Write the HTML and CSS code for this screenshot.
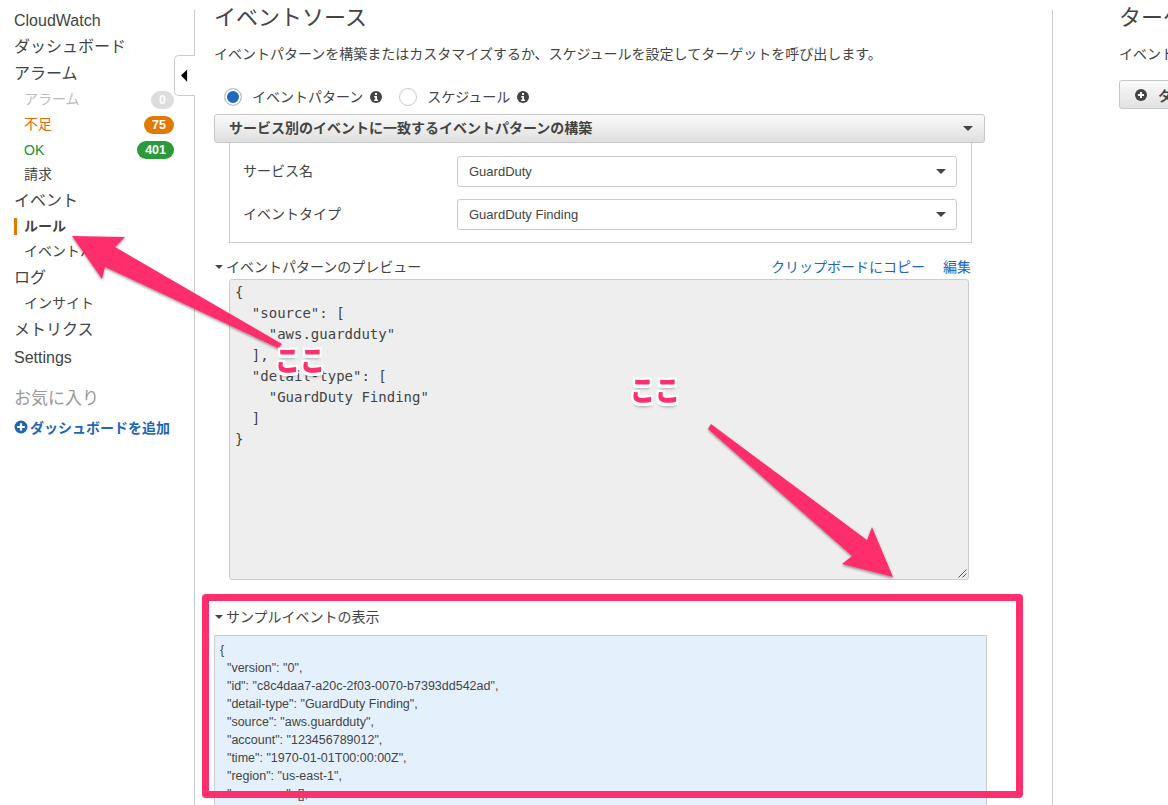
FILE: index.html
```html
<!DOCTYPE html>
<html lang="ja">
<head>
<meta charset="utf-8">
<title>CloudWatch</title>
<link rel="stylesheet" href="styles.css">
</head>
<body>
<div class="page">
  <nav class="sidebar">
    <div class="nav-top brand">CloudWatch</div>
    <div class="nav-top">ダッシュボード</div>
    <div class="nav-top">アラーム</div>
    <div class="nav-sub muted"><span class="ja">アラーム</span><span class="badge badge-grey">0</span></div>
    <div class="nav-sub orange"><span class="ja">不足</span><span class="badge badge-orange">75</span></div>
    <div class="nav-sub green"><span>OK</span><span class="badge badge-green">401</span></div>
    <div class="nav-sub"><span class="ja">請求</span></div>
    <div class="nav-top">イベント</div>
    <div class="nav-sub active"><span class="ja">ルール</span></div>
    <div class="nav-sub"><span class="ja">イベントバス</span></div>
    <div class="nav-top">ログ</div>
    <div class="nav-sub"><span class="ja">インサイト</span></div>
    <div class="nav-top">メトリクス</div>
    <div class="nav-top nav-latin">Settings</div>
    <div class="fav-title">お気に入り</div>
    <div class="fav-add">
      <svg class="icon-add" viewBox="0 0 14 14"><circle cx="7" cy="7" r="6.5" fill="#1f66b5"/><path d="M7 3.2v7.6M3.2 7h7.6" stroke="#fff" stroke-width="2.2"/></svg>
      <span>ダッシュボードを追加</span>
    </div>
    <button class="collapse" aria-label="collapse"><svg viewBox="0 0 8 14" class="collapse-arrow"><path d="M7 0v14L0 7z" fill="#000"/></svg></button>
  </nav>

  <main class="main">
    <h2 class="title">イベントソース</h2>
    <p class="desc">イベントパターンを構築またはカスタマイズするか、スケジュールを設定してターゲットを呼び出します。</p>
    <div class="radios">
      <span class="radio radio-on"></span>
      <span class="radio-label">イベントパターン</span>
      <svg class="info" viewBox="0 0 12 12"><circle cx="6" cy="6" r="6" fill="#444"/><rect x="5" y="2" width="2" height="2" fill="#fff"/><path d="M4.2 5h2.8v3.4h1V10H4.2V8.4h1V6.4h-1z" fill="#fff"/></svg>
      <span class="radio radio-off"></span>
      <span class="radio-label">スケジュール</span>
      <svg class="info" viewBox="0 0 12 12"><circle cx="6" cy="6" r="6" fill="#444"/><rect x="5" y="2" width="2" height="2" fill="#fff"/><path d="M4.2 5h2.8v3.4h1V10H4.2V8.4h1V6.4h-1z" fill="#fff"/></svg>
    </div>
    <div class="bar"><span class="ja">サービス別のイベントに一致するイベントパターンの構築</span><i class="caret"></i></div>
    <div class="panel">
      <div class="field"><label class="field-label ja">サービス名</label><div class="select"><span>GuardDuty</span><i class="caret"></i></div></div>
      <div class="field"><label class="field-label ja">イベントタイプ</label><div class="select"><span>GuardDuty Finding</span><i class="caret"></i></div></div>
    </div>
    <div class="section-head head-preview">
      <i class="caret caret-small"></i><span class="section-name">イベントパターンのプレビュー</span>
      <a class="link link-copy">クリップボードにコピー</a><a class="link">編集</a>
    </div>
    <div class="code-area">
<pre class="code">{
  "source": [
    "aws.guardduty"
  ],
  "detail-type": [
    "GuardDuty Finding"
  ]
}</pre>
      <svg class="grip" viewBox="0 0 9 9"><path d="M0.5 8.5l8-8M4.5 8.5l4-4" stroke="#555" stroke-width="1"/></svg>
    </div>
    <div class="section-head head-sample">
      <i class="caret caret-small"></i><span class="section-name">サンプルイベントの表示</span>
    </div>
    <pre class="sample">{
  "version": "0",
  "id": "c8c4daa7-a20c-2f03-0070-b7393dd542ad",
  "detail-type": "GuardDuty Finding",
  "source": "aws.guardduty",
  "account": "123456789012",
  "time": "1970-01-01T00:00:00Z",
  "region": "us-east-1",
  "resources": [],
  "detail": {}
}</pre>
  </main>

  <aside class="right">
    <h2 class="title">ターゲット</h2>
    <p class="desc">イベントまたはスケジュールが発生したときに呼び出すターゲットを選択します。</p>
    <div class="add-btn">
      <svg class="icon-plus" viewBox="0 0 12 12"><circle cx="6" cy="6" r="6" fill="#444"/><path d="M6 3v6M3 6h6" stroke="#fff" stroke-width="2"/></svg>
      <span>ターゲットの追加</span>
    </div>
  </aside>
</div>

<svg class="arrows" viewBox="0 0 1168 805">
  <defs><filter id="sh" x="-10%" y="-10%" width="120%" height="120%"><feDropShadow dx="0" dy="1.5" stdDeviation="1.2" flood-color="#000" flood-opacity=".4"/></filter></defs>
  <polygon filter="url(#sh)" fill="#fe2f6c" points="72,236 125,237 115,247 282,344 278,348 105,267 102,279"/>
  <polygon filter="url(#sh)" fill="#fe2f6c" points="893,577 842,564 852,556 708,429 711,424 867,540 872,527"/>
</svg>
<div class="redbox"></div>
<span class="note note-a">ここ</span>
<span class="note note-b">ここ</span>
</body>
</html>
```

FILE: styles.css
```css
* { box-sizing: border-box; }
html, body { margin: 0; height: 805px; overflow: hidden; background: #fff; }
body {
  position: relative;
  width: 1168px;
  font-family: "Liberation Sans", "Noto Sans CJK JP", sans-serif;
  font-size: 14px;
  color: #444;
}
.page { display: flex; align-items: flex-start; width: 1400px; height: 805px; }
.ja { margin-bottom: 4px; }

/* sidebar */
.sidebar {
  position: relative;
  flex: none;
  width: 195px;
  height: 795px;
  margin-top: 10px;
  padding: 0 20px 0 14px;
  border-right: 1px solid #ccc;
}
.nav-top { height: 27px; line-height: 27px; font-size: 16px; }
.brand { height: 20px; line-height: 22px; margin-bottom: 3px; }
.nav-latin { line-height: 29px; }
.nav-sub {
  position: relative;
  display: flex;
  justify-content: space-between;
  align-items: center;
  height: 25px;
  padding-left: 10px;
  font-size: 14px;
}
.muted { color: #bbb; }
.orange { color: #dd6b10; }
.green { color: #1d8f2f; }
.active { font-weight: 700; }
.active::before {
  content: "";
  position: absolute;
  left: 0;
  top: 4px;
  width: 3px;
  height: 17px;
  background: #e07b00;
}
.badge {
  height: 18px;
  line-height: 18px;
  padding: 0 8px;
  border-radius: 9px;
  color: #fff;
  font-size: 12.5px;
  font-weight: 700;
}
.badge-grey { background: #ddd; }
.badge-orange { background: #e07b00; }
.badge-green { background: #2a9a3a; }
.fav-title { margin-top: 16px; height: 26px; line-height: 26px; font-size: 17px; color: #999; }
.fav-add {
  display: flex;
  align-items: center;
  gap: 2px;
  margin-top: 5px;
  height: 20px;
  font-weight: 700;
  color: #1f66b5;
}
.icon-add { flex: none; width: 14px; height: 14px; }
.collapse {
  position: absolute;
  left: 174px;
  top: 45px;
  display: flex;
  align-items: center;
  justify-content: center;
  width: 21px;
  height: 41px;
  padding: 0 2px 0 0;
  background: #fff;
  border: 1px solid #ccc;
  border-right: 0;
  border-radius: 5px 0 0 5px;
}
.collapse-arrow { width: 7px; height: 13px; }

/* main column */
.main {
  flex: none;
  width: 858px;
  height: 795px;
  margin-top: 10px;
  padding-left: 19px;
  border-right: 1px solid #ccc;
}
.title { margin: 0; height: 14px; line-height: 16px; font-size: 22px; font-weight: 400; white-space: nowrap; }
.desc { margin: 20px 0 0; height: 20px; line-height: 20px; font-size: 14px; white-space: nowrap; }
.radios { display: flex; align-items: center; height: 26px; margin-top: 20px; padding-left: 10px; }
.radio { flex: none; width: 18px; height: 18px; border-radius: 50%; border: 1px solid #ccc; background: #fff; }
.radio-on { background: #1f68bf; box-shadow: inset 0 0 0 2px #fff; }
.radio-off { margin-left: 17px; }
.radio-label { margin-left: 10px; margin-bottom: 2px; white-space: nowrap; }
.info { flex: none; width: 12px; height: 12px; margin-left: 7px; }
.caret {
  display: block;
  flex: none;
  width: 0;
  height: 0;
  border-left: 5px solid transparent;
  border-right: 5px solid transparent;
  border-top: 5px solid #444;
}
.bar {
  display: flex;
  align-items: center;
  justify-content: space-between;
  width: 771px;
  height: 29px;
  margin-top: 4px;
  padding: 0 11px 0 14px;
  border: 1px solid #c6c6c6;
  border-radius: 3px;
  background: linear-gradient(#fafafa, #dfdfdf);
  font-weight: 700;
}
.panel {
  width: 743px;
  height: 100px;
  margin-left: 15px;
  padding: 13px 13px 0;
  border: 1px solid #ccc;
  border-top: 0;
}
.field { display: flex; align-items: center; margin-bottom: 12px; }
.field-label { flex: none; width: 214px; }
.select {
  display: flex;
  align-items: center;
  justify-content: space-between;
  width: 500px;
  height: 31px;
  padding: 0 10px 0 11px;
  border: 1px solid #ccc;
  border-radius: 3px;
  font-size: 13px;
}
.section-head { display: flex; align-items: center; height: 20px; }
.head-preview { width: 757px; margin-top: 13px; }
.head-sample { margin-top: 26px; }
.caret-small { border-left-width: 4px; border-right-width: 4px; border-top-width: 4px; margin: 1px 3px 0 1px; }
.section-name { white-space: nowrap; }
.link { color: #1f66b5; white-space: nowrap; }
.link-copy { margin-left: auto; margin-right: 18px; }
.code-area {
  position: relative;
  width: 740px;
  height: 301px;
  margin: 3px 0 0 15px;
  padding: 2px 5px;
  background: #eee;
  border: 1px solid #ccc;
  border-radius: 3px;
}
.code {
  margin: 0;
  font-family: "DejaVu Sans Mono", monospace;
  font-size: 14px;
  line-height: 21px;
  color: #444;
}
.grip { position: absolute; right: 1px; bottom: 1px; width: 9px; height: 9px; }
.sample {
  width: 773px;
  height: 220px;
  margin: 9px 0 0;
  padding: 5px 5px 0;
  background: #e4f1fd;
  border: 1px solid #ccc;
  font-family: "Liberation Sans", sans-serif;
  font-size: 12.5px;
  line-height: 18px;
  color: #444;
}

/* right column */
.right { flex: none; margin: 10px 0 0 66px; }
.add-btn {
  display: flex;
  align-items: center;
  gap: 11px;
  width: 200px;
  height: 29px;
  margin-top: 16px;
  padding-left: 15px;
  border: 1px solid #c6c6c6;
  border-radius: 3px;
  background: linear-gradient(#fafafa, #e2e2e2);
  font-weight: 700;
}
.icon-plus { flex: none; width: 12px; height: 12px; }

/* annotations */
.arrows { position: absolute; left: 0; top: 0; width: 1168px; height: 805px; pointer-events: none; }
.redbox {
  position: absolute;
  left: 202px;
  top: 594px;
  width: 821px;
  height: 204px;
  border: 7px solid #fe2f6c;
  border-radius: 4px;
}
.note {
  position: absolute;
  font-size: 25px;
  line-height: 28px;
  font-weight: 900;
  color: #fe2f6c;
  transform: scaleY(1.15);
  text-shadow: 2px 0 0 #fff, -2px 0 0 #fff, 0 2px 0 #fff, 0 -2px 0 #fff, 2px 2px 0 #fff, -2px 2px 0 #fff, 2px -2px 0 #fff, -2px -2px 0 #fff, 0 3px 3px rgba(0,0,0,.35);
}
.note-a { left: 275px; top: 347px; }
.note-b { left: 630px; top: 377px; }
```
